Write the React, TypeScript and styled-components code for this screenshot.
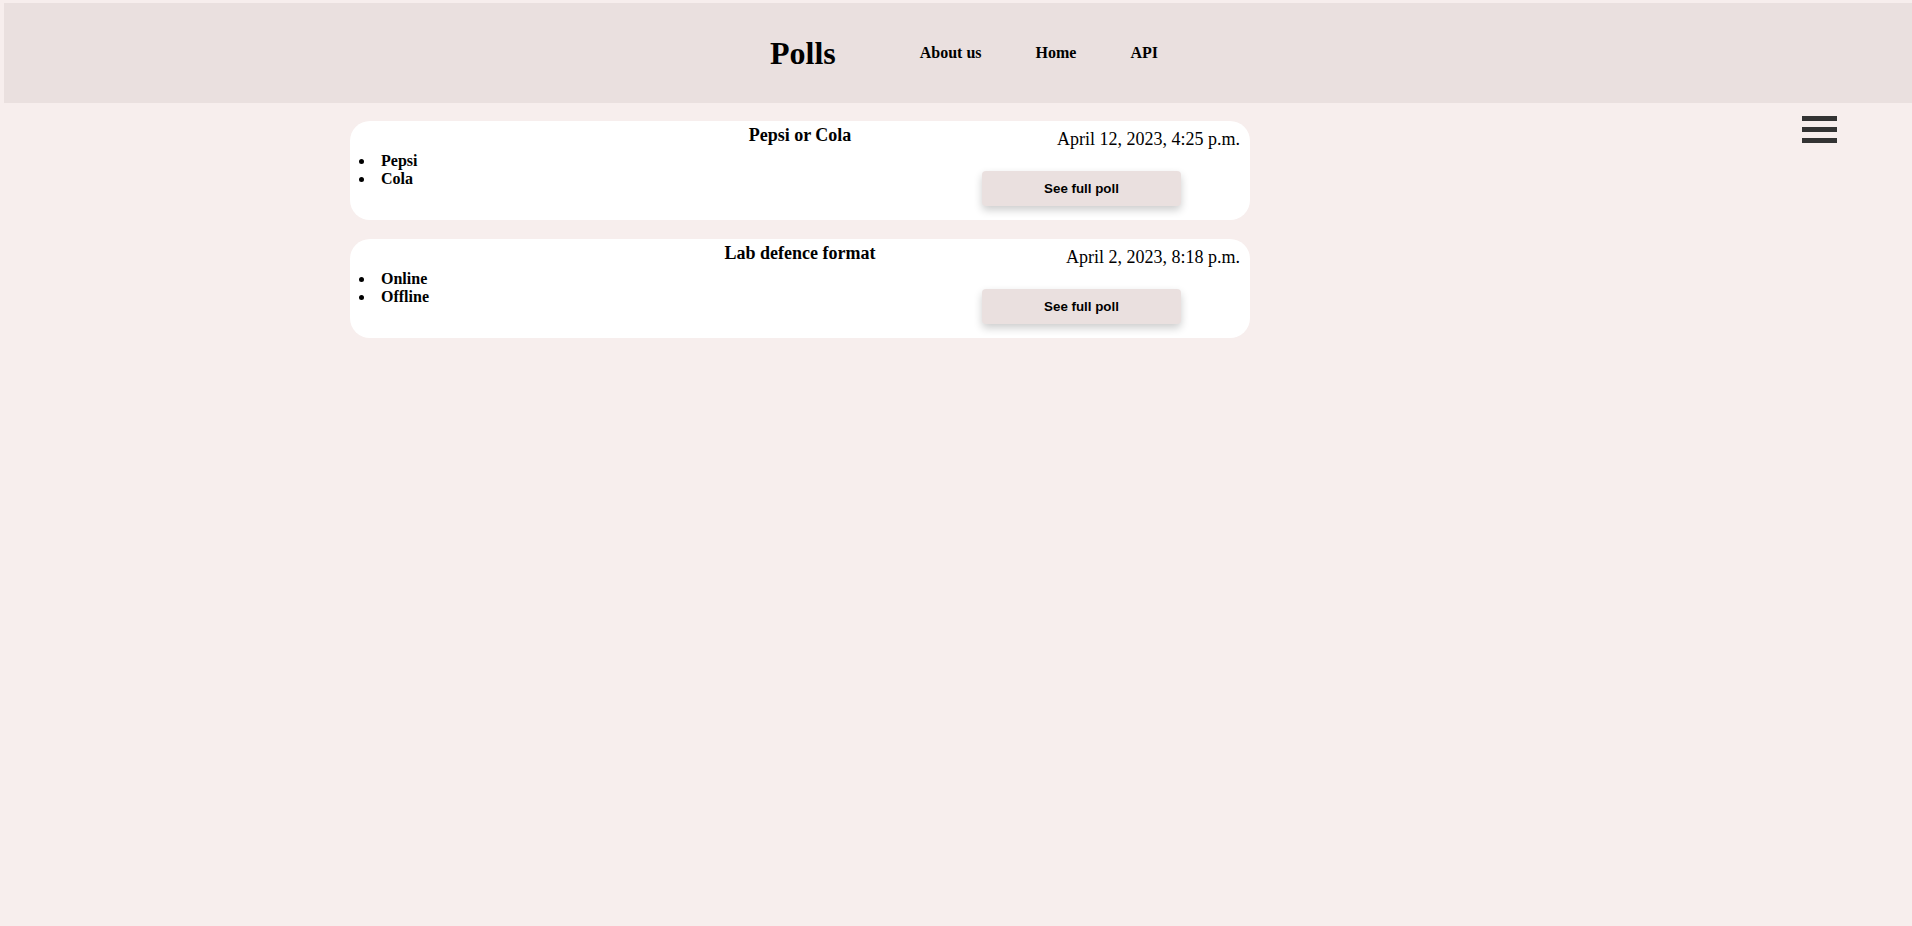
import React from "react";
import styled, { createGlobalStyle } from "styled-components";

const GlobalStyle = createGlobalStyle`
  html, body {
    margin: 0;
    padding: 0;
    background: #f7eeed;
    font-family: "Liberation Serif", "Times New Roman", serif;
    color: #000;
  }
`;

const Header = styled.header`
  margin: 3px 0 0 4px;
  height: 100px;
  background: #eae0df;
  display: flex;
  align-items: center;
  justify-content: center;
  padding-left: 12px;
`;

const Logo = styled.h1`
  margin: 0 84px 0 0;
  font-size: 32px;
  font-weight: bold;
`;

const Nav = styled.nav`
  display: flex;
  gap: 54px;
`;

const NavLink = styled.a`
  font-size: 16px;
  font-weight: bold;
  color: #000;
  text-decoration: none;
`;

const Main = styled.main`
  display: flex;
  align-items: flex-start;
  padding: 7px 75px 0 350px;
`;

const Cards = styled.div`
  width: 900px;
  margin-top: 11px;
  display: flex;
  flex-direction: column;
  gap: 19px;
`;

const Card = styled.section`
  background: #fff;
  border-radius: 20px;
  padding: 4px 10px 14px 0;
  height: 99px;
  box-sizing: border-box;
`;

const CardTop = styled.div`
  display: grid;
  grid-template-columns: 1fr auto 1fr;
  align-items: start;
  padding-left: 10px;
`;

const Title = styled.h3`
  grid-column: 2;
  margin: 0;
  font-size: 18px;
  font-weight: bold;
  text-align: center;
`;

const DateText = styled.div`
  grid-column: 3;
  justify-self: end;
  margin-top: 4px;
  font-size: 18px;
`;

const CardBody = styled.div`
  display: flex;
  align-items: flex-start;
`;

const Options = styled.ul`
  flex: 1;
  margin: 2px 0 0;
  padding-left: 25px;
`;

const Option = styled.li`
  padding-left: 6px;
  font-size: 16px;
  font-weight: bold;
`;

const PollButton = styled.button`
  margin: 21px 59px 0 0;
  width: 199px;
  height: 35px;
  border: none;
  border-radius: 4px;
  background: #eae0df;
  box-shadow: 0 4px 8px 0 rgba(0, 0, 0, 0.2);
  font-family: "Liberation Sans", Arial, sans-serif;
  font-size: 13.33px;
  font-weight: bold;
  color: #000;
  cursor: pointer;
`;

const Burger = styled.div`
  margin-left: auto;
  width: 35px;
`;

const BurgerBar = styled.div`
  width: 35px;
  height: 5px;
  background: #333;
  margin: 6px 0;
`;

const polls = [
  { title: "Pepsi or Cola", date: "April 12, 2023, 4:25 p.m.", options: ["Pepsi", "Cola"] },
  { title: "Lab defence format", date: "April 2, 2023, 8:18 p.m.", options: ["Online", "Offline"] },
];

export default function App() {
  return (
    <>
      <GlobalStyle />
      <Header>
        <Logo>Polls</Logo>
        <Nav>
          <NavLink href="#">About us</NavLink>
          <NavLink href="#">Home</NavLink>
          <NavLink href="#">API</NavLink>
        </Nav>
      </Header>
      <Main>
        <Cards>
          {polls.map((p) => (
            <Card key={p.title}>
              <CardTop>
                <Title>{p.title}</Title>
                <DateText>{p.date}</DateText>
              </CardTop>
              <CardBody>
                <Options>
                  {p.options.map((o) => (
                    <Option key={o}>{o}</Option>
                  ))}
                </Options>
                <PollButton>See full poll</PollButton>
              </CardBody>
            </Card>
          ))}
        </Cards>
        <Burger>
          <BurgerBar />
          <BurgerBar />
          <BurgerBar />
        </Burger>
      </Main>
    </>
  );
}
